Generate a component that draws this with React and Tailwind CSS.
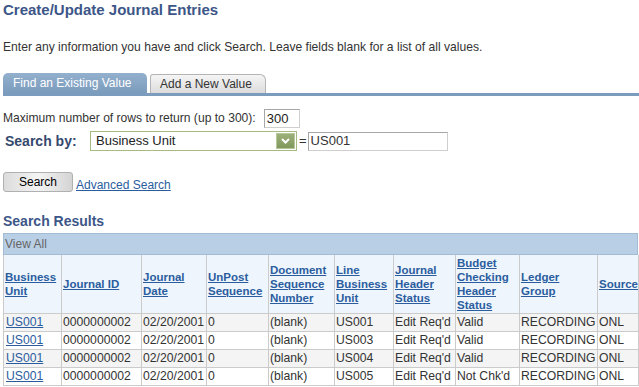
import React from "react";

const cols = [58, 80, 65, 62, 66, 59, 62, 64, 78, 41];

const headers = [
  "Business Unit",
  "Journal ID",
  "Journal Date",
  "UnPost Sequence",
  "Document Sequence Number",
  "Line Business Unit",
  "Journal Header Status",
  "Budget Checking Header Status",
  "Ledger Group",
  "Source",
];

const rows = [
  ["US001", "0000000002", "02/20/2001", "0", "(blank)", "US001", "Edit Req'd", "Valid", "RECORDING", "ONL"],
  ["US001", "0000000002", "02/20/2001", "0", "(blank)", "US003", "Edit Req'd", "Valid", "RECORDING", "ONL"],
  ["US001", "0000000002", "02/20/2001", "0", "(blank)", "US004", "Edit Req'd", "Valid", "RECORDING", "ONL"],
  ["US001", "0000000002", "02/20/2001", "0", "(blank)", "US005", "Edit Req'd", "Not Chk'd", "RECORDING", "ONL"],
];

const App = () => {
  return (
    <div className="w-[639px] h-[387px] overflow-hidden bg-white font-['Liberation_Sans',Arial,sans-serif] text-[12px] text-[#333]">
      <h1 className="pl-[3px] pt-px h-[19px] leading-[18px] text-[15px] font-bold text-[#3d5688]">
        Create/Update Journal Entries
      </h1>
      <p className="pl-[3px] mt-[21px] leading-[14px] text-[12.1px]">
        Enter any information you have and click Search. Leave fields blank for a list of all values.
      </p>

      <div className="mt-[19px] pl-[3px] flex items-end gap-[3px] h-[20px]">
        <div className="w-[144px] h-[20px] rounded-t-[5px] bg-gradient-to-b from-[#93b0cd] to-[#7c9cbd] text-white flex items-center pl-[10px] leading-none">
          Find an Existing Value
        </div>
        <div className="w-[116px] h-[19px] rounded-tr-[6px] rounded-tl-[3px] border border-b-0 border-[#b4b4b4] bg-gradient-to-b from-[#f5f5f5] to-[#dcdcdc] flex items-center pl-[9px] leading-none text-[#333]">
          Add a New Value
        </div>
      </div>
      <div className="ml-[3px] h-[3px] bg-[#7c9cbd]" />

      <div className="mt-[13px] pl-[3px] flex items-center h-[19px]">
        <span className="text-[12.1px]">Maximum number of rows to return (up to 300):</span>
        <div className="ml-[8px] w-[36px] h-[19px] border border-[#a6a6a6] border-b-[#cfcfcf] border-r-[#cfcfcf] flex items-center pl-[2px] text-[13px] text-[#222]">
          300
        </div>
      </div>

      <div className="mt-[3px] flex items-center h-[20px]">
        <span className="ml-[5px] w-[85px] text-[14px] font-bold text-[#34496e]">Search by:</span>
        <div className="w-[207px] h-[20px] border border-[#a5bb82] flex items-center justify-between pl-[5px] pr-px">
          <span className="text-[13px] text-[#222]">Business Unit</span>
          <div className="w-[19px] h-[16px] border border-[#b6c89a] bg-gradient-to-b from-[#9cb07a] to-[#80985c] flex items-center justify-center">
            <svg width="9" height="6" viewBox="0 0 9 6">
              <path d="M1 1 L4.5 4.5 L8 1" stroke="white" strokeWidth="2" fill="none" />
            </svg>
          </div>
        </div>
        <span className="ml-[2px] text-[13px]">=</span>
        <div className="ml-px w-[140px] h-[19px] border border-[#a6a6a6] border-b-[#cfcfcf] border-r-[#cfcfcf] flex items-center pl-[2px] text-[13px] text-[#333]">
          US001
        </div>
      </div>

      <div className="mt-[21px] pl-[3px] flex items-center h-[20px]">
        <button className="w-[70px] h-[20px] rounded-[3px] border border-[#b0b0b0] bg-gradient-to-r from-[#dcdcdc] via-[#f4f4f4] to-[#d4d4d4] text-[12px] text-black leading-none">
          Search
        </button>
        <a href="#" className="ml-[3px] mt-[5px] text-[#2b5d9e] underline">Advanced Search</a>
      </div>

      <h2 className="mt-[20px] pl-[3px] h-[18px] leading-[18px] text-[14px] font-bold text-[#3d5688]">
        Search Results
      </h2>

      <div className="ml-[3px] mt-[3px] w-[635px]">
        <div className="h-[22px] border border-[#a2bcd6] bg-[#b9cfe5] flex items-center pl-[1px] text-[#666]">
          View All
        </div>
        <table className="table-fixed border-collapse w-[635px]">
          <colgroup>
            {cols.map((w, i) => (
              <col key={i} style={{ width: w }} />
            ))}
          </colgroup>
          <thead>
            <tr className="h-[58px] bg-[#eef5fd]">
              {headers.map((h) => (
                <th
                  key={h}
                  className="border border-[#cbcbcb] border-t-0 pl-px pr-0 text-left align-middle font-bold text-[11.5px] leading-[14px]"
                >
                  <a href="#" className="text-[#2b5d9e] underline">{h}</a>
                </th>
              ))}
            </tr>
          </thead>
          <tbody>
            {rows.map((r, i) => (
              <tr key={i} className={i % 2 === 0 ? "h-[18px] bg-[#f4f4f4]" : "h-[18px] bg-white"}>
                {r.map((c, j) => (
                  <td
                    key={j}
                    className="border border-[#cbcbcb] pl-px pr-0 leading-[16px] whitespace-nowrap overflow-hidden text-[12.2px]"
                  >
                    {j === 0 ? (
                      <a href="#" className="ml-px text-[#2b5d9e] underline">{c}</a>
                    ) : (
                      c
                    )}
                  </td>
                ))}
              </tr>
            ))}
          </tbody>
        </table>
      </div>
    </div>
  );
};

export default App;
